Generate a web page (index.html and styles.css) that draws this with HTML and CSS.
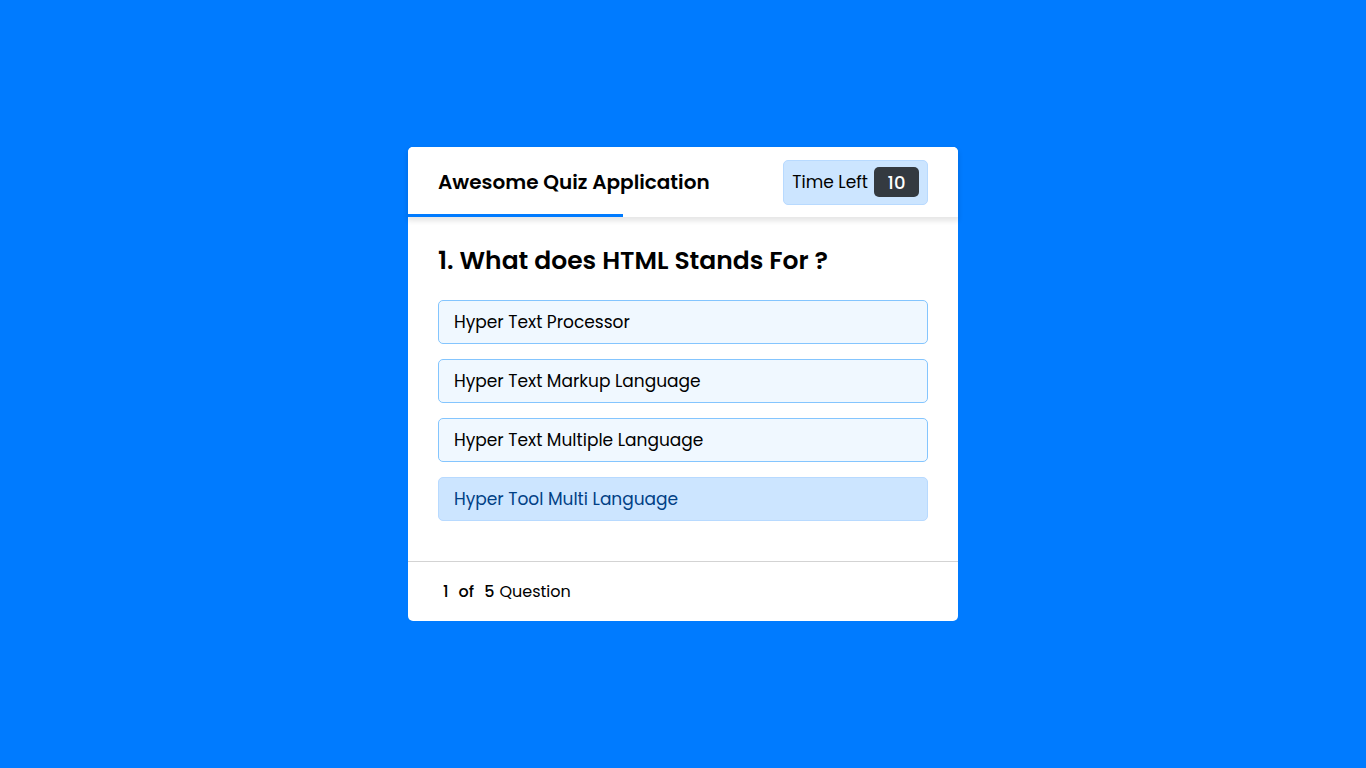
FILE: index.html
```html
<!DOCTYPE html>
<html lang="en">
<head>
<meta charset="UTF-8">
<title>Awesome Quiz Application</title>
<link rel="stylesheet" href="styles.css">
</head>
<body>
<div class="quiz-box">
  <header class="quiz-header">
    <div class="title">Awesome Quiz Application</div>
    <div class="timer">
      <div class="time-left-txt">Time Left</div>
      <div class="timer-sec">10</div>
    </div>
    <div class="time-line" style="width: 215px"></div>
  </header>
  <section class="quiz-section">
    <div class="que-text">1. What does HTML Stands For ?</div>
    <div class="option-list">
      <div class="option">Hyper Text Processor</div>
      <div class="option">Hyper Text Markup Language</div>
      <div class="option">Hyper Text Multiple Language</div>
      <div class="option option-hover">Hyper Tool Multi Language</div>
    </div>
  </section>
  <footer class="quiz-footer">
    <div class="total-que"><span class="num">1</span><span class="num">of</span><span class="num">5</span><span class="label">Question</span></div>
  </footer>
</div>
</body>
</html>
```
FILE: styles.css
```css
* {
  margin: 0;
  padding: 0;
  box-sizing: border-box;
}

body {
  font-family: "Poppins", "Inter", "Open Sans", sans-serif;
  background: #007bff;
  height: 100vh;
  display: flex;
  align-items: center;
  justify-content: center;
  color: #000;
}

.quiz-box {
  width: 550px;
  background: #fff;
  border-radius: 5px;
}

.quiz-header {
  position: relative;
  height: 70px;
  padding: 0 30px;
  display: flex;
  align-items: center;
  justify-content: space-between;
  box-shadow: 0px 3px 5px 1px rgba(0, 0, 0, 0.1);
  border-radius: 5px 5px 0 0;
  z-index: 1;
  background: #fff;
}

.title {
  font-size: 20px;
  font-weight: 600;
}

.timer {
  height: 45px;
  padding: 0 8px;
  display: flex;
  align-items: center;
  background: #cce5ff;
  border: 1px solid #b8daff;
  border-radius: 5px;
  color: #004085;
}

.time-left-txt {
  font-size: 17px;
  font-weight: 400;
  color: #000;
}

.timer-sec {
  margin-left: 6px;
  width: 45px;
  height: 30px;
  display: flex;
  align-items: center;
  justify-content: center;
  background: #343a40;
  color: #fff;
  border-radius: 5px;
  font-size: 18px;
  font-weight: 500;
}

.time-line {
  position: absolute;
  left: 0;
  bottom: 0;
  height: 3px;
  background: #007bff;
}

.quiz-section {
  padding: 25px 30px 20px 30px;
}

.que-text {
  font-size: 25px;
  font-weight: 600;
  line-height: 37px;
}

.option-list {
  padding: 21px 0 20px 0;
  display: flex;
  flex-direction: column;
  gap: 15px;
}

.option {
  height: 44px;
  padding: 0 15px;
  display: flex;
  align-items: center;
  background: aliceblue;
  border: 1px solid #84c5fe;
  border-radius: 5px;
  font-size: 17px;
  color: #000;
}

.option-hover {
  color: #004085;
  background: #cce5ff;
  border: 1px solid #b8daff;
}

.quiz-footer {
  height: 60px;
  padding: 0 30px;
  display: flex;
  align-items: center;
  border-top: 1px solid lightgrey;
}

.total-que {
  display: flex;
  align-items: center;
  font-size: 16px;
}

.total-que .num {
  font-weight: 500;
  padding: 0 5px;
}

.total-que .label {
  font-weight: 400;
}
```
